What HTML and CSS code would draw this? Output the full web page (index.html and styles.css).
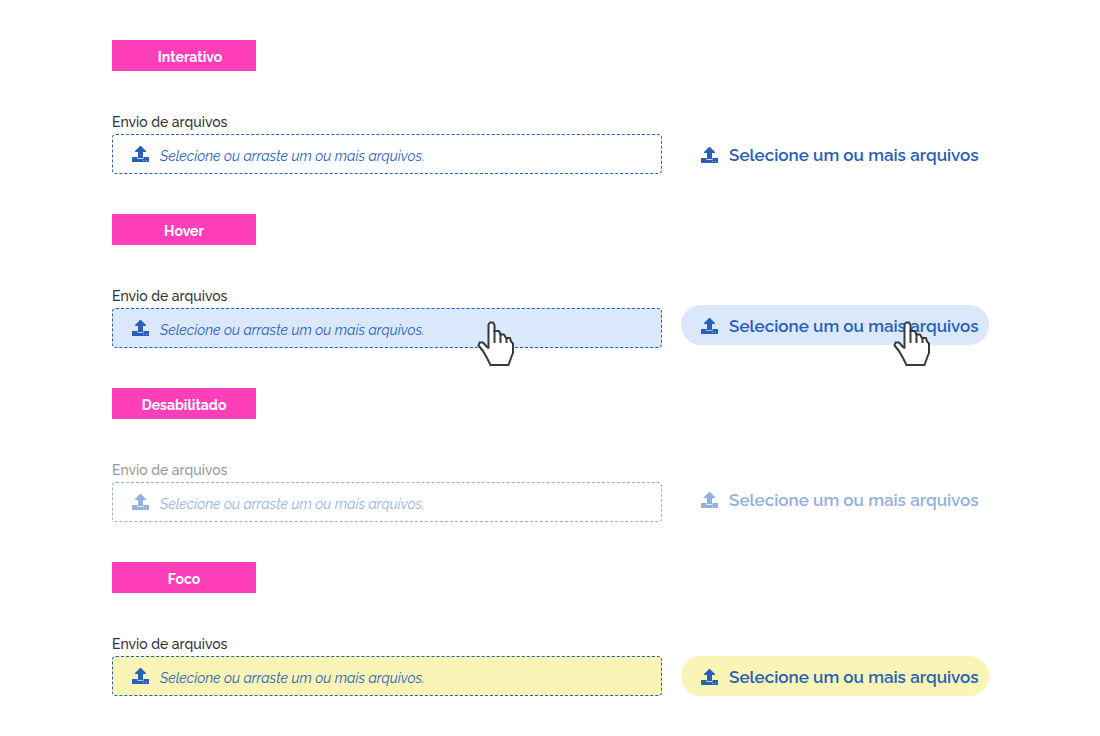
FILE: index.html
```html
<!DOCTYPE html>
<html lang="pt-BR">
<head>
<meta charset="utf-8">
<meta name="viewport" content="width=device-width, initial-scale=1">
<title>Envio de arquivos</title>
<link rel="stylesheet" href="styles.css">
</head>
<body>
<svg class="defs" aria-hidden="true">
  <symbol id="upload" viewBox="0 0 17 16">
    <path fill="currentColor" fill-rule="evenodd" d="M8 0h1l5 5v1h-3v6.300H6V6H3V5ZM0 11h5.600v2h5.800v-2H17v5H0ZM11.300 14v.8h.8V14ZM14 14v.8h.8V14Z"/>
  </symbol>
  <symbol id="hand" viewBox="0 0 40 48">
    <path fill="#fff" stroke="#343a40" stroke-width="2" stroke-linejoin="round" d="M12.500 28V4.500L14 2.500h3L18.500 5v6H23l1.500 3.500H28l2 3.500h4l1 3.500 2 2V33l-2 5-2.500 7h-18L11 38l-4-7-4.500-5.500L3.500 22.500H7l4 4.500Z"/>
    <path fill="none" stroke="#343a40" stroke-width="2" d="M18.500 10v13M24.500 13v10M30.500 17v6"/>
  </symbol>
</svg>
<main class="page">
  <section class="state">
    <h2 class="tag tag-indent">Interativo</h2>
    <div class="row">
      <div class="field">
        <label class="label" for="drop-1">Envio de arquivos</label>
        <button class="drop" id="drop-1" type="button"><svg class="icon"><use href="#upload"/></svg><span>Selecione ou arraste um ou mais arquivos.</span></button>
      </div>
      <button class="pick" type="button"><svg class="icon"><use href="#upload"/></svg><span>Selecione um ou mais arquivos</span></button>
    </div>
  </section>
  <section class="state is-hover">
    <h2 class="tag">Hover</h2>
    <div class="row">
      <div class="field">
        <label class="label" for="drop-2">Envio de arquivos</label>
        <button class="drop" id="drop-2" type="button"><svg class="icon"><use href="#upload"/></svg><span>Selecione ou arraste um ou mais arquivos.</span><svg class="hand"><use href="#hand"/></svg></button>
      </div>
      <button class="pick pick-raised" type="button"><svg class="icon"><use href="#upload"/></svg><span>Selecione um ou mais arquivos</span><svg class="hand"><use href="#hand"/></svg></button>
    </div>
  </section>
  <section class="state is-disabled">
    <h2 class="tag">Desabilitado</h2>
    <div class="row">
      <div class="field">
        <label class="label" for="drop-3">Envio de arquivos</label>
        <button class="drop" id="drop-3" type="button" disabled><svg class="icon"><use href="#upload"/></svg><span>Selecione ou arraste um ou mais arquivos.</span></button>
      </div>
      <button class="pick pick-raised" type="button" disabled><svg class="icon"><use href="#upload"/></svg><span>Selecione um ou mais arquivos</span></button>
    </div>
  </section>
  <section class="state is-focus">
    <h2 class="tag">Foco</h2>
    <div class="row">
      <div class="field">
        <label class="label" for="drop-4">Envio de arquivos</label>
        <button class="drop" id="drop-4" type="button"><svg class="icon"><use href="#upload"/></svg><span>Selecione ou arraste um ou mais arquivos.</span></button>
      </div>
      <button class="pick" type="button"><svg class="icon"><use href="#upload"/></svg><span>Selecione um ou mais arquivos</span></button>
    </div>
  </section>
</main>
</body>
</html>
```
FILE: styles.css
```css
* {
  box-sizing: border-box;
}

body {
  margin: 0;
  background: #fff;
  color: #333;
  font-family: Raleway, Lato, sans-serif;
}

.defs {
  position: absolute;
  width: 0;
  height: 0;
}

.page {
  display: flex;
  flex-direction: column;
  gap: 40px;
  padding: 40px 111px 40px 112px;
}

.tag {
  width: 144px;
  margin: 0 0 41px;
  padding: 7px 0 4px;
  background: #ff3fb9;
  color: #fff;
  font-size: 14px;
  font-weight: 700;
  line-height: 20px;
  text-align: center;
}

.tag-indent {
  padding-left: 12px;
}

.row {
  display: grid;
  grid-template-columns: minmax(0, 1fr) 308px;
  gap: 19px;
  align-items: end;
}

.field {
  display: flex;
  flex-direction: column;
  gap: 2px;
}

.label {
  font-size: 14px;
  font-weight: 500;
  line-height: 20px;
}

.drop,
.pick {
  position: relative;
  display: flex;
  align-items: center;
  height: 40px;
  margin: 0;
  background: transparent;
  color: #2760b8;
  font-family: inherit;
  text-align: left;
  white-space: nowrap;
}

.drop {
  gap: 11px;
  padding: 0 19px;
  border: 1px dashed #2760b8;
  border-radius: 4px;
  font-size: 14px;
  font-style: italic;
}

.drop span {
  padding-top: 3px;
}

.pick {
  gap: 11px;
  padding: 2px 10px 0 20px;
  border: 0;
  border-radius: 20px;
  font-size: 17px;
  font-weight: 600;
}

.pick-raised {
  margin-bottom: 3px;
}

.icon {
  flex: none;
  width: 17px;
  height: 16px;
}

.hand {
  position: absolute;
  width: 40px;
  height: 48px;
}

.drop .hand {
  top: 11px;
  right: 145px;
}

.pick .hand {
  top: 15px;
  right: 57px;
}

.is-hover .drop,
.is-hover .pick {
  background: #dbe8fb;
}

.is-focus .drop,
.is-focus .pick {
  background: #fbf4b7;
}

.is-disabled .label {
  color: #999;
}

.is-disabled .drop,
.is-disabled .pick {
  border-color: #94b0de;
  color: #94b0de;
}
```
